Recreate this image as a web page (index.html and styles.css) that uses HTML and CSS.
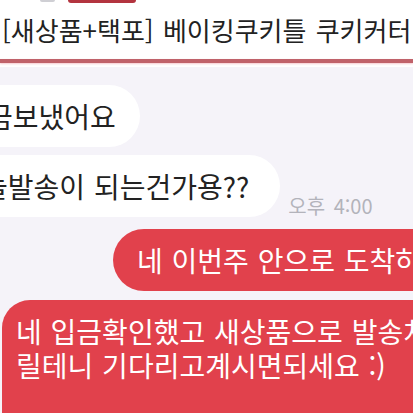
FILE: index.html
```html
<!DOCTYPE html>
<html lang="ko">
<head>
  <meta charset="UTF-8">
  <meta name="viewport" content="width=device-width, initial-scale=1.0">
  <title>채팅</title>
  <link rel="stylesheet" href="styles.css">
</head>
<body>

<!-- 상단 버튼 끝부분 -->
<div class="tabs">
  <span class="chip gray"></span>
  <span class="chip red"></span>
</div>

<!-- 상품 제목 -->
<div class="title">[새상품+택포] 베이킹쿠키틀 쿠키커터</div>
<div class="rule"></div>

<!-- 대화 -->
<div class="chat">
  <div class="row">
    <div class="bubble in first">금보냈어요</div>
  </div>
  <div class="row">
    <div class="bubble in second">늘발송이 되는건가용??</div>
    <span class="time">오후 4:00</span>
  </div>
  <div class="row">
    <div class="bubble out short">네 이번주 안으로 도착하실거예요</div>
  </div>
  <div class="row">
    <div class="bubble out long">
      <span class="line">네 입금확인했고 새상품으로 발송처</span>
      <span class="line">릴테니 기다리고계시면되세요 :)</span>
    </div>
  </div>
</div>

</body>
</html>
```

FILE: styles.css
```css
body {
  margin: 0;
  width: 413px;
  height: 413px;
  overflow: hidden;
  background-color: #fff;
  font-family: "Noto Sans CJK KR", "Noto Sans", sans-serif;
  color: #222;
}

/* Bottoni tagliati in alto */
.tabs {
  display: flex;
  height: 3px;
  padding-left: 40px;
}

.chip {
  display: block;
  border-radius: 0 0 3px 3px;
}

.chip.gray {
  width: 15px;
  height: 2px;
  background-color: #cfcfd4;
}

.chip.red {
  width: 68px;
  height: 3px;
  margin-left: 13px;
  background-color: #b3343f;
}

.title {
  font-size: 26px;
  line-height: 30px;
  padding: 12px 0 14px 2px;
  white-space: nowrap;
  word-spacing: 2px;
}

.rule {
  height: 4px;
  background-color: #c0626a;
  box-shadow: 0 1px 2px rgba(240, 150, 160, 0.5);
}

.chat {
  margin-top: 4px;
  padding-top: 18px;
  height: 400px;
  background-color: #f5f3f9;
}

.row {
  display: flex;
  align-items: flex-end;
  margin-bottom: 8px;
  white-space: nowrap;
}

.bubble {
  display: flex;
  align-items: center;
  height: 62px;
  border-radius: 31px;
  font-size: 28px;
  line-height: 32px;
  word-spacing: 1px;
  box-sizing: border-box;
}

.bubble.in {
  background-color: #fff;
  color: #222;
  margin-left: -40px;
  padding-right: 24px;
}

.bubble.first {
  padding-left: 27px;
}

.bubble.second {
  padding-left: 22px;
  padding-right: 31px;
}

.time {
  margin-left: 8px;
  margin-bottom: 1px;
  font-size: 20px;
  line-height: 20px;
  word-spacing: 3px;
  color: #b3b3bb;
}

.bubble.out {
  background-color: #e1414c;
  color: #fff;
}

.bubble.short {
  margin-top: 4px;
  margin-left: 113px;
  padding-left: 24px;
  width: 400px;
  flex-shrink: 0;
}

.bubble.long {
  margin-top: 1px;
  margin-left: 2px;
  display: block;
  width: 460px;
  height: 140px;
  flex-shrink: 0;
  border-radius: 28px 0 0 0;
  padding: 14px 0 0 14px;
  line-height: 34px;
}

.line {
  display: block;
  height: 34px;
}
```
